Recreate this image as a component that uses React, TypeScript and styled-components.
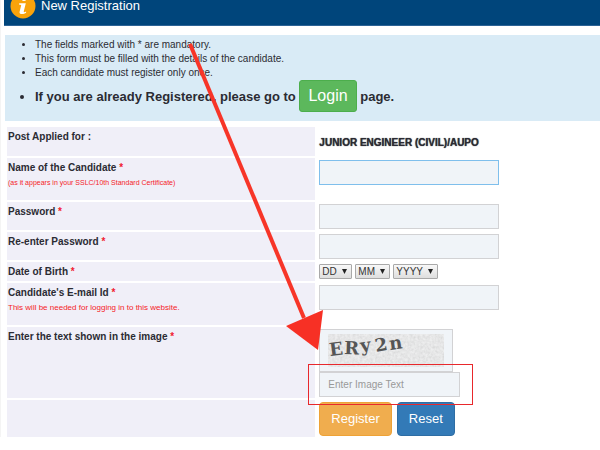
import React from "react";
import styled, { createGlobalStyle } from "styled-components";

const GlobalStyle = createGlobalStyle`
  * { box-sizing: border-box; }
  body {
    margin: 0;
    background: #fff;
    color: #2b2b33;
    font: 10px/14px "Liberation Sans", Arial, sans-serif;
  }
`;

const Page = styled.main`
  position: relative;
  padding-left: 3px;
  border-left: 1px solid #f4f4f4;
`;

const Header = styled.header`
  display: flex;
  align-items: flex-end;
  height: 26px;
  padding: 0 6px 6px;
  background: #00457b;
  border-bottom: 1px solid #2c6396;
`;

const Title = styled.h1`
  display: flex;
  align-items: center;
  gap: 5px;
  margin: 0;
  color: #fff;
  font-size: 13px;
  font-weight: 400;
  line-height: 14px;
`;

const Notice = styled.section`
  margin: 9px 0 0 1px;
  padding: 3px 0 9px;
  background: #d9ebf6;
`;

const NoticeList = styled.ul`
  margin: 0;
  padding: 0 0 0 30px;
`;

const NoticeItem = styled.li<{ $strong?: boolean }>`
  font-size: ${(p) => (p.$strong ? "13px" : "10px")};
  font-weight: ${(p) => (p.$strong ? 700 : 400)};
  line-height: 14px;
`;

const Button = styled.button<{ $tone: "orange" | "blue" }>`
  height: 34px;
  padding: 0 11px;
  border: 1px solid ${(p) => ({ orange: "#eea236", blue: "#2e6da4" })[p.$tone]};
  border-radius: 4px;
  background: ${(p) => ({ orange: "#f0ad4e", blue: "#337ab7" })[p.$tone]};
  color: #fff;
  font: 13px/16px "Liberation Sans", Arial, sans-serif;
`;

const LoginLink = styled.a`
  display: inline-block;
  padding: 0 8px;
  border: 1px solid #4cae4c;
  border-radius: 3px;
  background: #5cb85c;
  color: #fff;
  font-size: 16px;
  font-weight: 400;
  line-height: 30px;
  text-decoration: none;
`;

const Form = styled.form`
  display: flex;
  flex-direction: column;
  gap: 2px;
  margin: 6px 0 0 3px;
`;

const Row = styled.div<{ $height: number }>`
  display: grid;
  grid-template-columns: 52% 1fr;
  column-gap: 4px;
  min-height: ${(p) => p.$height}px;
`;

const LabelCell = styled.div`
  padding: 3px 1px 2px;
  background: #f0eff8;
`;

const Label = styled.label`
  display: block;
  font-weight: 700;
`;

const Star = styled.span`
  color: #f02030;
`;

const Hint = styled.small<{ $size: number }>`
  display: block;
  margin-top: 2px;
  color: #f51c28;
  font-size: ${(p) => p.$size}px;
  line-height: 12px;
`;

const Field = styled.div<{ $center?: boolean }>`
  display: flex;
  flex-direction: column;
  justify-content: ${(p) => (p.$center ? "center" : "flex-start")};
  padding-top: 2px;
`;

const Inline = styled.div<{ $gap: number }>`
  display: flex;
  gap: ${(p) => p.$gap}px;
`;

const Post = styled.strong`
  text-shadow: 0 0 1px #2b2b33;
`;

const Input = styled.input<{ $width?: number; $active?: boolean }>`
  width: ${(p) => p.$width ?? 180}px;
  height: 25px;
  padding: 0 8px;
  border: 1px solid ${(p) => (p.$active ? "#7fbfec" : "#d2d2d4")};
  border-radius: 0;
  background: #f0f4f8;
  color: #333;
  font: 10px/14px "Liberation Sans", Arial, sans-serif;
  outline: none;
  &::placeholder { color: #999; opacity: 1; }
`;

const SelectBox = styled.span<{ $width: number }>`
  display: grid;
  align-items: center;
  width: ${(p) => p.$width}px;
  height: 15px;
  & > * { grid-area: 1 / 1; }
`;

const Select = styled.select`
  width: 100%;
  height: 15px;
  padding: 0 2px;
  appearance: none;
  border: 1px solid #a9a9a9;
  border-radius: 1px;
  background: linear-gradient(#f8f8f8, #dedede);
  color: #333;
  font: 10px/13px "Liberation Sans", Arial, sans-serif;
`;

const Caret = styled.svg`
  justify-self: end;
  margin-right: 5px;
  pointer-events: none;
`;

const Captcha = styled.div`
  display: flex;
  width: 134px;
  height: 43px;
  padding: 4px 8px;
  border: 1px solid #d2d2d4;
  background: #f0f4f8;
`;

const CaptchaDrawing = styled.svg`
  overflow: visible;
`;

const Annotation = styled.svg`
  position: absolute;
  top: 0;
  left: -1px;
  pointer-events: none;
`;

function InfoIcon() {
  return (
    <svg width="26" height="26" viewBox="0 0 26 26" aria-hidden="true">
      <circle cx="13" cy="13" r="12.5" fill="#f9a30b" />
      <circle cx="14" cy="5.8" r="2.3" fill="#fff" />
      <path d="M9.2 10.3h6.6l-2 8c-.3 1.2.6 1.1 2.3.1v1.3c-2 1.7-7.4 2.4-6.5-1l1.6-6.5c-.6-.3-1.3-.4-2-.4z" fill="#fff" />
    </svg>
  );
}

function DateSelect({ name, text, width, id }: { name: string; text: string; width: number; id?: string }) {
  return (
    <SelectBox $width={width}>
      <Select id={id} aria-label={name} defaultValue={text}>
        <option>{text}</option>
      </Select>
      <Caret width="5" height="5" viewBox="0 0 5 5" aria-hidden="true">
        <path d="M0 0h5L2.5 5z" fill="#222" />
      </Caret>
    </SelectBox>
  );
}

function CaptchaImage() {
  const glyphs = [
    { c: "E", x: 2, y: 22, r: -7 },
    { c: "R", x: 16, y: 20, r: 2 },
    { c: "y", x: 33, y: 18, r: -8 },
    { c: "2", x: 48, y: 18, r: -10 },
    { c: "n", x: 62, y: 16, r: -8 },
  ];
  return (
    <CaptchaDrawing width="116" height="33" viewBox="0 0 116 33" role="img" aria-label="ERy2n">
      <filter id="grain" x="0" y="0" width="100%" height="100%">
        <feTurbulence type="fractalNoise" baseFrequency="0.4" numOctaves="2" seed="4" />
        <feColorMatrix values="0.5 0 0 0 0.62  0.5 0 0 0 0.62  0.5 0 0 0 0.62  0 0 0 0 1" />
      </filter>
      <rect width="116" height="33" fill="#dcddde" />
      <rect width="116" height="33" filter="url(#grain)" opacity="0.5" />
      <g fill="#555" fontFamily="'DejaVu Serif', serif" fontSize="18" fontWeight="700">
        {glyphs.map((g) => (
          <text key={g.c} x={g.x} y={g.y} transform={`rotate(${g.r} ${g.x} ${g.y})`}>
            {g.c}
          </text>
        ))}
      </g>
    </CaptchaDrawing>
  );
}

function Required({ htmlFor, children }: { htmlFor: string; children: React.ReactNode }) {
  return (
    <Label htmlFor={htmlFor}>
      {children} <Star>*</Star>
    </Label>
  );
}

export default function App() {
  return (
    <>
      <GlobalStyle />
      <Page>
        <Header>
          <Title>
            <InfoIcon />
            New Registration
          </Title>
        </Header>
        <Notice>
          <NoticeList>
            <NoticeItem>The fields marked with * are mandatory.</NoticeItem>
            <NoticeItem>This form must be filled with the details of the candidate.</NoticeItem>
            <NoticeItem>Each candidate must register only once.</NoticeItem>
            <NoticeItem $strong>
              If you are already Registered, please go to <LoginLink href="#login">Login</LoginLink> page.
            </NoticeItem>
          </NoticeList>
        </Notice>
        <Form onSubmit={(e) => e.preventDefault()}>
          <Row $height={29}>
            <LabelCell>
              <Label as="span">Post Applied for :</Label>
            </LabelCell>
            <Field $center>
              <Post>JUNIOR ENGINEER (CIVIL)/AUPO</Post>
            </Field>
          </Row>
          <Row $height={42}>
            <LabelCell>
              <Required htmlFor="name">Name of the Candidate</Required>
              <Hint $size={7}>(as it appears in your SSLC/10th Standard Certificate)</Hint>
            </LabelCell>
            <Field>
              <Input id="name" $active />
            </Field>
          </Row>
          <Row $height={28}>
            <LabelCell>
              <Required htmlFor="password">Password</Required>
            </LabelCell>
            <Field>
              <Input id="password" type="password" />
            </Field>
          </Row>
          <Row $height={28}>
            <LabelCell>
              <Required htmlFor="confirm">Re-enter Password</Required>
            </LabelCell>
            <Field>
              <Input id="confirm" type="password" />
            </Field>
          </Row>
          <Row $height={19}>
            <LabelCell>
              <Required htmlFor="day">Date of Birth</Required>
            </LabelCell>
            <Field>
              <Inline $gap={3}>
                <DateSelect id="day" name="Day" text="DD" width={33} />
                <DateSelect name="Month" text="MM" width={35} />
                <DateSelect name="Year" text="YYYY" width={45} />
              </Inline>
            </Field>
          </Row>
          <Row $height={42}>
            <LabelCell>
              <Required htmlFor="email">Candidate's E-mail Id</Required>
              <Hint $size={8}>This will be needed for logging in to this website.</Hint>
            </LabelCell>
            <Field>
              <Input id="email" type="email" />
            </Field>
          </Row>
          <Row $height={71}>
            <LabelCell>
              <Required htmlFor="captcha">Enter the text shown in the image</Required>
            </LabelCell>
            <Field>
              <Captcha>
                <CaptchaImage />
              </Captcha>
              <Input id="captcha" $width={141} placeholder="Enter Image Text" />
            </Field>
          </Row>
          <Row $height={37}>
            <LabelCell />
            <Field>
              <Inline $gap={5}>
                <Button $tone="orange" type="submit">Register</Button>
                <Button $tone="blue" type="reset">Reset</Button>
              </Inline>
            </Field>
          </Row>
        </Form>
        <Annotation width="600" height="450" viewBox="0 0 600 450" aria-hidden="true">
          <path d="M190 44L304 318" stroke="#f73528" strokeWidth="4" />
          <path d="M286 326L323 310L318 350z" fill="#f73025" />
          <rect x="308.5" y="364.5" width="164" height="40" fill="none" stroke="#e8282c" />
        </Annotation>
      </Page>
    </>
  );
}
